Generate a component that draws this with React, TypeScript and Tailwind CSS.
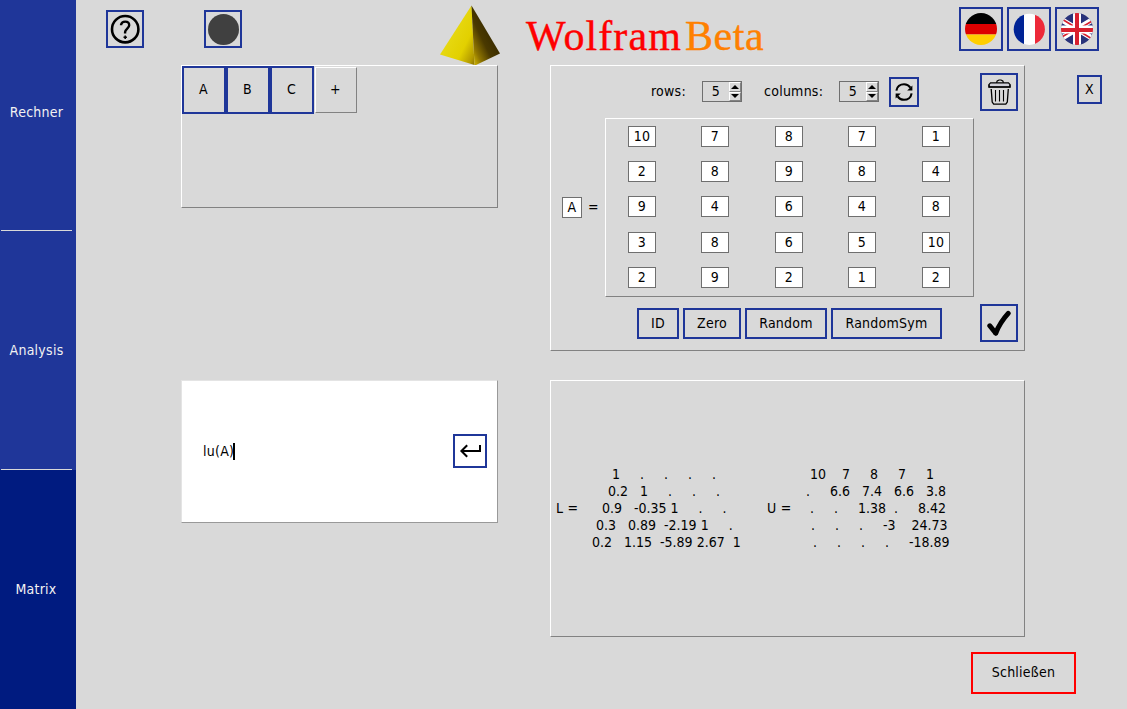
import React from "react";

const BLUE_BUTTON = "box-border flex items-center justify-center border-2 border-[#1f3699]";
const RAISED = "border border-t-white border-l-white border-r-[#828282] border-b-[#828282]";

const matrixA = [
  [10, 7, 8, 7, 1],
  [2, 8, 9, 8, 4],
  [9, 4, 6, 4, 8],
  [3, 8, 6, 5, 10],
  [2, 9, 2, 1, 2],
];

const lowerRows = [
  { pad: "pl-[20px]", text: "1     .     .     .     ." },
  { pad: "pl-[16px]", text: "0.2   1     .     .     ." },
  { pad: "pl-[10px]", text: "0.9   -0.35 1     .     ." },
  { pad: "pl-[4px]", text: "0.3   0.89  -2.19 1     ." },
  { pad: "pl-0", text: "0.2   1.15  -5.89 2.67  1" },
];

const upperRows = [
  { pad: "pl-[4px]", text: "10    7     8     7     1" },
  { pad: "pl-0", text: ".     6.6   7.4   6.6   3.8" },
  { pad: "pl-[4px]", text: ".     .     1.38  .     8.42" },
  { pad: "pl-[5px]", text: ".     .     .     -3    24.73" },
  { pad: "pl-[7px]", text: ".     .     .     .     -18.89" },
];

function Sidebar() {
  return (
    <nav className="flex w-[76px] shrink-0 flex-col bg-[#1f3699] text-[#f2f2f2]">
      <div className="flex h-[230px] items-center justify-center pr-[3px] pb-[5px]">
        <span>Rechner</span>
      </div>
      <div className="ml-px h-px w-[71px] bg-[#d9d9d9]" />
      <div className="flex h-[238px] items-center justify-center pr-[3px]">
        <span>Analysis</span>
      </div>
      <div className="ml-px h-px w-[71px] bg-[#d9d9d9]" />
      <div className="flex flex-1 items-center justify-center bg-[#001b80] pr-[4px]">
        <span>Matrix</span>
      </div>
    </nav>
  );
}

function Pyramid() {
  return (
    <svg className="mt-[5px] ml-[198px] h-[60px] w-[60px] shrink-0" viewBox="0 0 60 60">
      <defs>
        <linearGradient id="leftFace" x1="0.2" y1="0.3" x2="1" y2="1">
          <stop offset="0" stopColor="#e9dc18" />
          <stop offset="0.6" stopColor="#e2d000" />
          <stop offset="0.88" stopColor="#b39a00" />
          <stop offset="1" stopColor="#8a7000" />
        </linearGradient>
        <linearGradient id="rightFace" x1="0.7" y1="0.35" x2="0.1" y2="0.95">
          <stop offset="0" stopColor="#362900" />
          <stop offset="0.45" stopColor="#4a3900" />
          <stop offset="0.8" stopColor="#8f7500" />
          <stop offset="1" stopColor="#c4aa00" />
        </linearGradient>
      </defs>
      <path d="M31.5 0.5 0 49.5 34.5 60Z" fill="url(#leftFace)" />
      <path d="M31.5 0.5 60 48.5 36 60H34.5Z" fill="url(#rightFace)" />
    </svg>
  );
}

function HelpIcon() {
  return (
    <svg className="size-[30px]" viewBox="0 0 30 30" fill="none" stroke="#000">
      <circle cx="15.2" cy="15.2" r="13.2" strokeWidth="2.6" />
      <path d="M11.1 11.3V10.5C11.6 8.3 13 7.6 15.2 7.6 17.6 7.6 19.2 9 19.2 11.2 19.2 14.2 15.3 14.8 15.1 18V19.6" strokeWidth="2.4" />
      <path d="M15.2 21.6V25M13.5 23.3H16.9" strokeWidth="1.5" />
    </svg>
  );
}

function GermanFlag() {
  return (
    <svg className="size-8" viewBox="0 0 32 32">
      <clipPath id="de"><circle cx="16" cy="16" r="16" /></clipPath>
      <g clipPath="url(#de)">
        <path d="M0 0H32V11H0Z" fill="#000" />
        <path d="M0 11H32V21.5H0Z" fill="#dd0000" />
        <path d="M0 21.5H32V32H0Z" fill="#ffce00" />
      </g>
    </svg>
  );
}

function FrenchFlag() {
  return (
    <svg className="size-8" viewBox="0 0 32 32">
      <clipPath id="fr"><circle cx="16.3" cy="16.3" r="15.6" /></clipPath>
      <g clipPath="url(#fr)">
        <path d="M0 0H11V32H0Z" fill="#002395" />
        <path d="M11 0H22V32H11Z" fill="#fff" />
        <path d="M22 0H32V32H22Z" fill="#ed2939" />
      </g>
    </svg>
  );
}

function BritishFlag() {
  return (
    <svg className="size-8" viewBox="0 0 32 32">
      <clipPath id="gb"><circle cx="16" cy="16" r="16" /></clipPath>
      <g clipPath="url(#gb)">
        <path d="M0 0H32V32H0Z" fill="#29337a" />
        <path d="M-4 4 36 28M36 4-4 28" stroke="#fff" strokeWidth="5.4" />
        <path d="M-4 3.2 16 15.2M36 28.8 16 16.8M36 5 16 17M-4 27 16 15" stroke="#d8202e" strokeWidth="1.7" />
        <path d="M16 0V32M0 16.5H32" stroke="#fff" strokeWidth="8" />
        <path d="M16 0V32M0 17H32" stroke="#d8202e" strokeWidth="4" />
      </g>
    </svg>
  );
}

function TrashIcon() {
  return (
    <svg className="h-[26px] w-[23px]" viewBox="0 0 23 26" fill="none" stroke="#000">
      <path d="M8.5 3.7 9.2 2 11 1H13L14.8 2 15.5 3.7" strokeWidth="1.2" />
      <path d="M2.5 3.9H20.5L22 5.5V8H1V5.5Z" fill="#d0d0d8" strokeWidth="1.1" />
      <path d="M1 5.5V8H22V5.5" strokeWidth="1.3" />
      <path d="M3.2 10 4.2 23 5.7 25.2H17.8L19.3 23 20.3 10" strokeWidth="1.3" />
      <path d="M7.5 11V22.5M11.5 11V22.5M15.5 11V22.5" strokeWidth="1.1" />
    </svg>
  );
}

function RefreshIcon() {
  return (
    <svg className="h-[20px] w-[20px]" viewBox="0 0 20 20" fill="none" stroke="#000" strokeWidth="2.1">
      <path d="M2.4 8.6C3 4.6 6.2 2.2 10 2.2 12.7 2.2 15 3.5 16.4 5.6" />
      <path d="M17.6 11.4C17 15.4 13.8 17.8 10 17.8 7.3 17.8 5 16.5 3.6 14.4" />
      <path d="M18.4 3.4V8.6H13.2Z" fill="#000" stroke="none" />
      <path d="M1.6 16.6V11.4H6.8Z" fill="#000" stroke="none" />
    </svg>
  );
}

function Spinbox({ value }: { value: number }) {
  return (
    <div className="flex h-[21px] w-[40px] border border-[#6f6f6f]">
      <span className="w-[26px] text-center leading-[19px]">{value}</span>
      <div className="flex w-[12px] flex-col">
        {["M3.5 0 7 3.5H0Z", "M0 0H7L3.5 3.5Z"].map((d) => (
          <div key={d} className={`flex flex-1 items-center justify-center ${RAISED}`}>
            <svg className="h-[4px] w-[8px] shrink-0" viewBox="0 0 7 3.5"><path d={d} /></svg>
          </div>
        ))}
      </div>
    </div>
  );
}

function MatrixEditor() {
  return (
    <section className={`h-[286px] w-[475px] shrink-0 ${RAISED}`}>
      <div className="flex h-[52px]">
        <span className="ml-[100px] mt-[17px] w-[51px]">rows:</span>
        <div className="mt-[15px]"><Spinbox value={5} /></div>
        <span className="mt-[17px] ml-[22px] w-[75px]">columns:</span>
        <div className="mt-[15px]"><Spinbox value={5} /></div>
        <button className={`mt-[11px] ml-[10px] size-[30px] ${BLUE_BUTTON}`}><RefreshIcon /></button>
        <button className={`mt-[7px] ml-[61px] size-[38px] ${BLUE_BUTTON}`}><TrashIcon /></button>
      </div>
      <div className="flex h-[179px] items-start">
        <div className="mt-[79px] ml-[11px] flex h-[21px] w-5 items-center justify-center border border-[#6f6f6f] bg-white">A</div>
        <span className="mt-[81px] w-[23px] text-center">=</span>
        <div className={`h-[179px] w-[369px] pt-[7px] pl-[22px] ${RAISED}`}>
          <div className="grid grid-cols-[73px_74px_73px_74px_28px] grid-rows-[35px_35px_36px_35px_21px]">
            {matrixA.flat().map((v, i) => (
              <div key={i} className="flex h-[21px] w-[28px] items-center justify-center border border-[#6f6f6f] bg-white">{v}</div>
            ))}
          </div>
        </div>
      </div>
      <div className="flex h-[53px] items-start">
        <button className={`mt-[11px] ml-[86px] h-[31px] w-[42px] ${BLUE_BUTTON}`}>ID</button>
        <button className={`mt-[11px] ml-1 h-[31px] w-[58px] ${BLUE_BUTTON}`}>Zero</button>
        <button className={`mt-[11px] ml-1 h-[31px] w-[82px] ${BLUE_BUTTON}`}>Random</button>
        <button className={`mt-[11px] ml-1 h-[31px] w-[111px] ${BLUE_BUTTON}`}>RandomSym</button>
        <button className={`mt-[7px] ml-[38px] size-[38px] ${BLUE_BUTTON}`}>
          <svg className="size-[26px]" viewBox="0 0 26 26" fill="none" stroke="#000" strokeWidth="5" strokeLinecap="round">
            <path d="M3.8 15.8 9.6 23" />
            <path d="M9.8 23C12.4 16.5 16.6 9.5 22.2 3.4" />
          </svg>
        </button>
      </div>
    </section>
  );
}

function MatrixRows({ rows }: { rows: { pad: string; text: string }[] }) {
  return (
    <div className="whitespace-pre leading-[17px] tracking-normal">
      {rows.map((r) => (
        <div key={r.text} className={r.pad}>{r.text}</div>
      ))}
    </div>
  );
}

export default function App() {
  return (
    <div className="flex h-[709px] w-[1127px] overflow-hidden bg-[#d9d9d9] font-['DejaVu_Sans_Condensed','DejaVu_Sans',sans-serif] text-[14px] leading-[17px] tracking-[0.25px] text-black [font-stretch:condensed]">
      <Sidebar />
      <main className="flex w-[1051px] flex-col">
        <header className="flex h-[65px] items-start">
          <button className={`mt-[10px] ml-[30px] size-[38px] ${BLUE_BUTTON}`}><HelpIcon /></button>
          <button className={`mt-[10px] ml-[60px] size-[38px] ${BLUE_BUTTON}`}>
            <span className="size-[31px] rounded-full bg-[#404040]" />
          </button>
          <Pyramid />
          <h1 className="mt-[12px] ml-[26px] flex h-[48px] w-[433px] font-['Liberation_Serif',serif] text-[42px] leading-[48px] [-webkit-text-stroke:0.4px]">
            <span className="w-[159px] tracking-[1.1px] text-[#ff0000]">Wolfram</span>
            <span className="tracking-[0.6px] text-[#ff8000]">Beta</span>
          </h1>
          <div className="mt-[7px] flex gap-1">
            <button className={`size-[44px] ${BLUE_BUTTON}`}><GermanFlag /></button>
            <button className={`size-[44px] ${BLUE_BUTTON}`}><FrenchFlag /></button>
            <button className={`size-[44px] ${BLUE_BUTTON}`}><BritishFlag /></button>
          </div>
        </header>

        <div className="flex h-[315px] items-start pl-[105px]">
          <section className={`flex h-[143px] w-[317px] shrink-0 items-start ${RAISED}`}>
            {["A", "B", "C"].map((name) => (
              <button key={name} className={`h-[48px] w-[44px] pr-px pb-[2px] ${BLUE_BUTTON}`}>{name}</button>
            ))}
            <button className={`mt-px ml-px flex h-[46px] w-[42px] items-center justify-center pr-px pb-[2px] ${RAISED}`}>+</button>
          </section>
          <div className="ml-[52px]"><MatrixEditor /></div>
          <button className={`mt-[10px] ml-[52px] h-[29px] w-[25px] ${BLUE_BUTTON}`}>X</button>
        </div>

        <div className="flex h-[272px] items-start pl-[105px]">
          <section className="flex h-[143px] w-[317px] shrink-0 items-center border border-t-[#e4e4e4] border-r-[#999] border-b-[#999] border-l-[#e4e4e4] bg-white pb-px">
            <div className="ml-[21px] flex h-[17px] w-[250px]">
              <span className="w-[30px] whitespace-nowrap">lu(A)</span>
              <span className="h-[17px] w-[2px] bg-black" />
            </div>
            <button className={`size-[34px] ${BLUE_BUTTON}`}>
              <svg className="h-[14px] w-[22px]" viewBox="0 0 22 14" fill="none" stroke="#000" strokeWidth="2">
                <path d="M21 1V7H2.5" />
                <path d="M8.2 1.2 2.4 7 8.2 12.8" />
              </svg>
            </button>
          </section>
          <section className={`ml-[52px] flex h-[257px] w-[475px] shrink-0 items-center ${RAISED}`}>
            <span className="ml-[5px] w-[36px]">L =</span>
            <div className="w-[175px]"><MatrixRows rows={lowerRows} /></div>
            <span className="w-[39px]">U =</span>
            <MatrixRows rows={upperRows} />
          </section>
        </div>

        <button className="ml-[895px] flex h-[42px] w-[105px] items-center justify-center border-2 border-[#ff0000] pb-[2px]">
          Schließen
        </button>
      </main>
    </div>
  );
}
